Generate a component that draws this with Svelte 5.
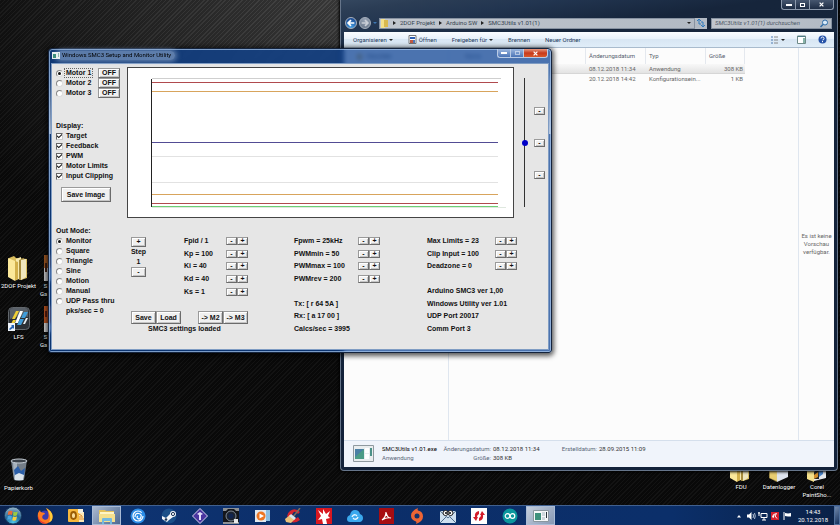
<script>
	const motors = ['Motor 1', 'Motor 2', 'Motor 3'];
	const displays = ['Target', 'Feedback', 'PWM', 'Motor Limits', 'Input Clipping'];
	const modes = ['Monitor', 'Square', 'Triangle', 'Sine', 'Motion', 'Manual', 'UDP Pass thru'];

	const pidParams = ['Fpid / 1', 'Kp = 100', 'Ki = 40', 'Kd = 40', 'Ks = 1'];
	const pwmParams = ['Fpwm = 25kHz', 'PWMmin = 50', 'PWMmax = 100', 'PWMrev = 200'];
	const limitParams = ['Max Limits = 23', 'Clip Input = 100', 'Deadzone = 0'];

	const traces = [
		{ y: 11, end: 373, color: '#cfcfcf' },
		{ y: 15, end: 370, color: '#b04a4e' },
		{ y: 24, end: 370, color: '#d8a45c' },
		{ y: 75, end: 370, color: '#524c94' },
		{ y: 89, end: 370, color: '#e2e2e2' },
		{ y: 115, end: 370, color: '#e2e2e2' },
		{ y: 127, end: 370, color: '#d8a45c' },
		{ y: 136, end: 370, color: '#b04a4e' },
		{ y: 140, end: 378, color: '#dfe8df' },
		{ y: 139, end: 370, color: '#6fce74' }
	];

	const files = [
		{ name: 'SMC3Utils v1.01.exe', date: '08.12.2018 11:34', type: 'Anwendung', size: '308 KB' },
		{ name: 'SMC3Utils.ini', date: '20.12.2018 14:42', type: 'Konfigurationsein...', size: '1 KB' }
	];

	let motor = $state('Motor 1');
	let mode = $state('Monitor');
	let position = $state(50);
</script>

{#snippet folder()}
	<svg class="folder" viewBox="0 0 22 26">
		<path d="M13 21l8-4-5 6z" fill="#444" opacity=".7" />
		<path d="M1 3l5-2 2 2 11 1v19l-6 2-12-4z" fill="#d9bd5e" />
		<path d="M8 4l5-2v21l-5 2z" fill="#f7eab0" />
		<path d="M11 5l5-2v19l-5 3z" fill="#a88d3c" />
		<path d="M13 5l5-1v18l-5 3z" fill="#efe6bd" />
		<path d="M0 3l7 3v20l-7-4z" fill="#fbe89a" />
		<path d="M7 6l3 1v17l-3 2z" fill="#d2b04c" />
	</svg>
{/snippet}

{#snippet param(text)}
	<div class="param">
		<span>{text}</span>
		<span class="spin">
			<button class="btn mini" aria-label="{text} decrease">-</button>
			<button class="btn mini" aria-label="{text} increase">+</button>
		</span>
	</div>
{/snippet}

<div class="screen">
	<main class="desktop">
		<button class="shortcut projekt">
			{@render folder()}
			<span>2DOF Projekt</span>
		</button>
		<button class="shortcut lfs">
			<svg viewBox="0 0 22 24">
				<rect x=".5" y=".5" width="21" height="22" rx="4" fill="#2b3036" stroke="#62676c" />
				<path d="M2 3q0-2 3-2h12q3 0 3 3v6q-9-2-18 2z" fill="#596068" />
				<path d="M8 4h3L7 12H4zM5 13h3l-2 4H3z" fill="#f0cf35" />
				<path d="M12 4h3l-5 12H7z" fill="#fff" />
				<path d="M16 5h4l-3 6h-4zM12 12h4l-3 6H9z" fill="#3f9cd9" />
				<path d="M18 11h2l-3 6h-2z" fill="#e8eef2" />
				<rect y="16" width="7" height="8" fill="#eef4fa" />
				<path d="M1 22l3-3-1-1h3v4l-1-1-3 2z" fill="#2764b5" />
			</svg>
			<span>LFS</span>
		</button>
		<button class="shortcut hidden-one">
			<svg viewBox="0 0 22 26">
				<rect width="22" height="13" fill="#a55b24" />
				<rect y="13" width="22" height="13" fill="#cfcfd2" />
				<rect x="1" y="8" width="2" height="9" fill="#412114" />
			</svg>
			<span>S<br />Ga</span>
		</button>
		<button class="shortcut hidden-two">
			<svg viewBox="0 0 22 26">
				<rect width="22" height="17" fill="#bd5420" />
				<rect y="17" width="22" height="9" fill="#d8d8da" />
				<rect x="1" y="5" width="2" height="6" fill="#5c1d10" />
			</svg>
			<span>S<br />Ga</span>
		</button>
		<button class="shortcut trash">
			<svg viewBox="0 0 22 24">
				<path d="M3 3l16-1-3 20q-5 2-10 0z" fill="#747e89" />
				<path d="M5 4l4 1v17l-3-1z" fill="#a7b2bd" />
				<path d="M6 12l4-4 3 5 4-3-1 8-9 1z" fill="#2c5fa8" />
				<path d="M7 17l4-2 5 2-1 5H7z" fill="#dbe4ec" />
				<ellipse cx="11" cy="3" rx="8" ry="2" fill="#3a4149" stroke="#c8d0d8" />
			</svg>
			<span>Papierkorb</span>
		</button>
		<button class="shortcut fdu">
			{@render folder()}
			<span>FDU</span>
		</button>
		<button class="shortcut logger">
			<svg viewBox="0 0 22 26">
				<path d="M2 3l7 3v19l-7-3z" fill="#f4df8a" />
				<path d="M8 5l12-2v18l-11 5z" fill="#dfe5ee" />
				<path d="M1 5l8 3v18l-8-4z" fill="#e2c565" opacity=".7" />
			</svg>
			<span>Datenlogger</span>
		</button>
		<button class="shortcut corel">
			<svg viewBox="0 0 22 26">
				<path d="M1 4l7 3v19l-7-3z" fill="#f4df8a" />
				<path d="M8 5l12-2v19l-12 3z" fill="#e7e9ec" />
				<path d="M8 16l5-6v13H8z" fill="#222" />
				<path d="M12 8l5-2v12l-4 3z" fill="#4c86cc" />
				<path d="M8 19l4-3v5l-4 2z" fill="#d38c2a" />
			</svg>
			<span>Corel<br />PaintSho...</span>
		</button>

		<!-- Windows Explorer -->
		<section class="explorer">
			<div class="caption">
				<button aria-label="Minimieren"><i class="g-min"></i></button>
				<button aria-label="Maximieren"><i class="g-max"></i></button>
				<button class="wide" aria-label="Schließen">
					<svg viewBox="0 0 8 8"><path d="M1 1l6 6M7 1L1 7" stroke="#fff" stroke-width="2" /></svg>
				</button>
			</div>

			<div class="navrow">
				<button class="round back" aria-label="Zurück">
					<svg viewBox="0 0 12 12"><path d="M10 6H3M6 2.500L2.500 6 6 9.500" /></svg>
				</button>
				<button class="round" aria-label="Vorwärts">
					<svg viewBox="0 0 12 12"><path d="M2 6h7M6 2.500L9.500 6 6 9.500" /></svg>
				</button>
				<i class="caret blue"></i>
				<div class="address">
					<svg class="tiny" viewBox="0 0 9 9">
						<path d="M1 0h4v9H1z" fill="#f4e08a" /><path d="M4 1h4v7H4z" fill="#d9b84e" />
					</svg>
					<i class="arrow"></i><a href="#projekt">2DOF Projekt</a>
					<i class="arrow"></i><a href="#arduino">Arduino SW</a>
					<i class="arrow"></i><a href="#utils">SMC3Utils v1.01(1)</a>
					<i class="caret end"></i>
				</div>
				<button class="refresh" aria-label="Aktualisieren">
					<svg viewBox="0 0 10 10">
						<path d="M1 3l2-2 2 2M3 1v5h2M5 7l2 2 2-2M7 9V4H5" fill="none" stroke="#2f7bbd" />
					</svg>
				</button>
				<div class="search">
					<input aria-label="Suche" placeholder="SMC3Utils v1.01(1) durchsuchen" />
					<svg class="tiny" viewBox="0 0 9 9">
						<circle cx="5" cy="3.500" r="2.500" fill="#d9eaf8" stroke="#2f6ca6" />
						<path d="M3 5.500L.5 8" stroke="#2f6ca6" stroke-width="1.500" />
					</svg>
				</div>
			</div>

			<div class="client">
				<div class="toolbar">
					<button>Organisieren <i class="caret"></i></button>
					<button>
						<svg class="tiny" viewBox="0 0 9 9">
							<path d="M1 .5h7v8H1z" fill="#fff" stroke="#777" />
							<path d="M2 2h5v2H2z" fill="#2d5fb4" /><path d="M2 5h3v3H2z" fill="#c05a43" />
							<path d="M5 5h2v3H5z" fill="#4d79ba" />
						</svg>
						Öffnen
					</button>
					<button>Freigeben für <i class="caret"></i></button>
					<button>Brennen</button>
					<button>Neuer Ordner</button>
					<div class="tools">
						<button aria-label="Ansicht ändern">
							<svg class="tiny" viewBox="0 0 9 9">
								<path d="M1 2h2M1 5h2M1 8h2" stroke="#4f7bb0" />
								<path d="M4 2h4M4 5h4M4 8h4" stroke="#888" />
							</svg>
							<i class="caret"></i>
						</button>
						<button aria-label="Vorschaufenster">
							<svg class="tiny" viewBox="0 0 9 9">
								<path d="M.5 1h8v7.500h-8z" fill="#fff" stroke="#6e8a88" />
								<path d="M6 3h2v5H6z" fill="#86b3a8" /><path d="M1 1.500h7" stroke="#4d7b86" />
							</svg>
						</button>
						<button aria-label="Hilfe">
							<svg class="tiny" viewBox="0 0 9 9">
								<circle cx="4.500" cy="4.500" r="4" fill="#2653a8" />
								<path d="M3 3.500q0-1.500 1.500-1.500T6 3.500 4.500 5M4.500 6v1.200" fill="none" stroke="#fff" />
							</svg>
						</button>
					</div>
				</div>

				<div class="panes">
					<div class="tree">
						<svg class="tiny" viewBox="0 0 9 9">
							<path d="M4.500 0l1 3h3L6 5l1 4-2.500-2L2 9l1-4L.5 3h3z" fill="#d9a93a" />
						</svg>
						Favoriten
					</div>
					<div class="list">
						<table>
							<thead>
								<tr><th>Name</th><th>Änderungsdatum</th><th>Typ</th><th>Größe</th></tr>
							</thead>
							<tbody>
								{#each files as file, i}
									<tr class:selected={i === 0}>
										<td>{file.name}</td>
										<td>{file.date}</td>
										<td>{file.type}</td>
										<td class="size">{file.size}</td>
									</tr>
								{/each}
							</tbody>
						</table>
					</div>
					<div class="preview">Es ist keine Vorschau verfügbar.</div>
				</div>

				<div class="details">
					<svg viewBox="0 0 21 17">
						<path d="M.5.5h20v16H.5z" fill="#e9edef" stroke="#8f999f" />
						<path d="M2 4h9v10H2z" fill="#4b9b86" />
						<path d="M2 4h9L2 12z" fill="#4a7fa5" />
						<path d="M12 3h4v5h-4zM12 9h4v5h-4z" fill="#fff" />
						<path d="M17 3h2v8h-2z" fill="#4b9188" />
					</svg>
					<div class="facts">
						<strong>SMC3Utils v1.01.exe</strong>
						<span class="key">Änderungsdatum:</span><span>08.12.2018 11:34</span>
						<span class="key">Erstelldatum:</span><span>28.09.2015 11:09</span>
						<span class="kind">Anwendung</span>
						<span class="key">Größe:</span><span>308 KB</span>
					</div>
				</div>
			</div>
		</section>

		<!-- SMC3 utility -->
		<section class="smc">
			<header>
				<svg class="appicon" viewBox="0 0 8 7">
					<path d="M0 0h8v7H0z" fill="#e8eef2" /><path d="M1 2h3v4H1z" fill="#3f8f7c" />
					<path d="M6 1h1v4H6z" fill="#8db8b0" />
				</svg>
				<h1>Windows SMC3 Setup and Monitor Utility</h1>
				<div class="caption">
					<button aria-label="Minimize"><i class="g-min"></i></button>
					<button aria-label="Maximize" disabled><i class="g-max"></i></button>
					<button class="wide close" aria-label="Close">
						<svg viewBox="0 0 8 8"><path d="M1 1l6 6M7 1L1 7" stroke="#fff" stroke-width="2" /></svg>
					</button>
				</div>
			</header>

			<div class="body">
				<div class="upper">
					<div class="side">
						{#each motors as name}
							<div class="motor">
								<label><input type="radio" name="motor" value={name} bind:group={motor} /><span>{name}</span></label>
								<button class="btn off">OFF</button>
							</div>
						{/each}
						<div class="heading display">Display:</div>
						{#each displays as name}
							<label><input type="checkbox" checked /><span>{name}</span></label>
						{/each}
						<button class="btn save-image">Save Image</button>
					</div>

					<svg class="plot" viewBox="0 0 385 149" preserveAspectRatio="none">
						{#each traces as t}
							<rect x="24" y={t.y - 1} width={t.end - 24} height="1" fill={t.color} />
						{/each}
						<rect x="23" y="11" width="1" height="128" fill="#222" />
					</svg>

					<div class="manual">
						<input type="range" min="0" max="100" bind:value={position} aria-label="Position" />
						<div class="marks">
							<button class="btn mini">-</button>
							<button class="btn mini">-</button>
							<button class="btn mini">-</button>
						</div>
					</div>
				</div>

				<div class="lower">
					<div class="modes">
						<div class="heading">Out Mode:</div>
						{#each modes as name}
							<label><input type="radio" name="mode" value={name} bind:group={mode} /><span>{name}</span></label>
						{/each}
						<div class="rate">pks/sec = 0</div>
					</div>

					<div class="middle">
						<div class="tuning">
							<div class="step">
								<button class="btn">+</button>
								<span>Step</span>
								<span>1</span>
								<button class="btn">-</button>
							</div>
							<div class="params pid">
								{#each pidParams as text}
									{@render param(text)}
								{/each}
							</div>
						</div>
						<div class="actions">
							<button class="btn">Save</button>
							<button class="btn">Load</button>
							<button class="btn copy">-&gt; M2</button>
							<button class="btn">-&gt; M3</button>
						</div>
						<div class="status">SMC3 settings loaded</div>
					</div>

					<div class="params pwm">
						{#each pwmParams as text}
							{@render param(text)}
						{/each}
						<div></div>
						<div>Tx: [ r 64 5A ]</div>
						<div>Rx: [ a 17 00 ]</div>
						<div>Calcs/sec = 3995</div>
					</div>

					<div class="params limits">
						{#each limitParams as text}
							{@render param(text)}
						{/each}
						<div></div>
						<div>Arduino SMC3 ver 1,00</div>
						<div>Windows Utility ver 1.01</div>
						<div>UDP Port 20017</div>
						<div>Comm Port 3</div>
					</div>
				</div>
			</div>
		</section>
	</main>

	<footer class="taskbar">
		<button class="start" aria-label="Start">
			<svg viewBox="0 0 20 20">
				<defs>
					<radialGradient id="orb" cx=".5" cy=".9" r=".9">
						<stop offset="0" stop-color="#4fc6e8" /><stop offset=".5" stop-color="#24699b" />
						<stop offset="1" stop-color="#9fb8c8" />
					</radialGradient>
				</defs>
				<circle cx="10" cy="10" r="9" fill="url(#orb)" stroke="#16375c" />
				<path d="M5 6q2-1.500 4.500-.5L9 9.500q-2-1-4.500 0z" fill="#ee6a35" />
				<path d="M10.500 6q2 1 4.500 0l-1 4q-2 1-4 0z" fill="#9ccb3f" />
				<path d="M4.500 10.500q2-1 4.300 0L8 14.500q-2-1-4 0z" fill="#4ba7e2" />
				<path d="M10 11q2 1 4.200 0l-1 4q-2 1-4 0z" fill="#f8cf3d" />
			</svg>
		</button>
		<nav class="apps">
			<button aria-label="Firefox">
				<svg viewBox="0 0 16 16">
					<circle cx="8" cy="8.500" r="6" fill="#3a3bb0" />
					<path d="M9 0q6 3 6.500 8T10 15.500Q3 17 1 10 0 5 3 2q0 2 2 2.500Q8 4 8 6l-2 1q-2 3 1 4.500 4 1 4.500-3Q12 4 9 0z" fill="#ff7a22" />
					<path d="M9 0q6 3 6.500 8T12 14.500Q14 11 13 7.500 12 3 9 0z" fill="#ffce3a" />
					<path d="M1 10q2 6 9 5.500l-3-1Q2 13 1 8z" fill="#e3293c" />
				</svg>
			</button>
			<button aria-label="Outlook">
				<svg viewBox="0 0 16 16">
					<rect x="0" y="1" width="12" height="13" rx="1" fill="#f6b83e" />
					<path d="M11 4h5v10h-5z" fill="#fbe7b6" /><path d="M10 1h5v4h-5z" fill="#f1efdf" />
					<ellipse cx="5.500" cy="7.500" rx="2.500" ry="3.500" fill="#f9dd9a" stroke="#9a5c05" stroke-width="1.800" />
					<path d="M11 9h4M11 11h5M11 6l3 2" stroke="#d9892b" />
				</svg>
			</button>
			<button class="active" aria-label="Explorer">
				<svg viewBox="0 0 16 16">
					<path d="M0 2h6l1 1h8v11H0z" fill="#e5c15a" /><path d="M1 4h14v3H1z" fill="#fff5c7" />
					<path d="M0 6h16v8H0z" fill="#f5e08e" /><path d="M3 16v-5q0-1 1-1h8q1 0 1 1v5h-2v-3H5v3z" fill="#74b8df" />
				</svg>
			</button>
			<button aria-label="Ubisoft Connect">
				<svg viewBox="0 0 16 16">
					<circle cx="8" cy="8" r="7.500" fill="#2b8ce6" />
					<circle cx="8" cy="8" r="5" fill="none" stroke="#fff" stroke-width="1.200" stroke-dasharray="27 5" />
					<path d="M5 9q0-4 3.500-3.500T11 9 8 10.500 8 8" fill="none" stroke="#fff" stroke-width="1.200" />
				</svg>
			</button>
			<button aria-label="Steam">
				<svg viewBox="0 0 16 16">
					<circle cx="8" cy="8" r="7.500" fill="#1b4f88" />
					<path d="M1 8l4 2 4-4q0-3 3-3t3 3-3 3l-4 3-2 2-5-3z" fill="#f2f5f8" />
					<circle cx="12" cy="6" r="1.600" fill="#f2f5f8" stroke="#1b3455" /><circle cx="5" cy="11.500" r="1.300" fill="#1b3455" />
				</svg>
			</button>
			<button aria-label="Simulator">
				<svg viewBox="0 0 16 16">
					<path d="M8 .5L15.500 8 8 15.500.5 8z" fill="#4a35a0" stroke="#d8d5ee" />
					<path d="M5 6l3-2 3 2-2 1v5H7V7z" fill="#e4e0fa" />
				</svg>
			</button>
			<button aria-label="Kamera">
				<svg viewBox="0 0 16 16">
					<rect width="16" height="16" fill="#8b8f94" /><path d="M0 3h3l2-2h6l2 2h3v11H0z" fill="#14161a" />
					<circle cx="8" cy="8" r="5" fill="#1c2431" stroke="#7d8894" /><circle cx="8" cy="8" r="2.500" fill="#10244f" />
					<path d="M11 11h4v4h-4z" fill="#e8e8e8" />
				</svg>
			</button>
			<button aria-label="Media Player">
				<svg viewBox="0 0 16 16">
					<rect x="4" y="2" width="12" height="11" fill="#8cbfe2" /><rect x="1" y="2" width="11" height="12" fill="#e2e9ef" />
					<circle cx="7" cy="8" r="4.500" fill="#ee7623" /><path d="M5.500 5.500L10 8l-4.500 2.500z" fill="#fff" />
				</svg>
			</button>
			<button aria-label="CCleaner">
				<svg viewBox="0 0 16 16">
					<path d="M15 4Q10-1 5 3t-1 9 11 0l-2-3q-3 3-5 1t0-5 5 1z" fill="#d3242f" />
					<path d="M15 0L8 9" stroke="#7e6c5a" stroke-width="1.500" /><path d="M0 11l5-4 5 4-4 4-5-1z" fill="#ebc17a" />
					<path d="M4 8l2-2 5 4-2 2z" fill="#d9e5ed" />
				</svg>
			</button>
			<button aria-label="IrfanView">
				<svg viewBox="0 0 16 16">
					<rect width="16" height="16" fill="#d91820" />
					<path d="M2 2l5 4V1l3 5 4-3-2 5 2 2-4 1 1 5H7l-1-5-4 1 3-4z" fill="#fff" />
				</svg>
			</button>
			<button aria-label="Cloud">
				<svg viewBox="0 0 16 16">
					<path d="M3 14q-3 0-3-3t3-4Q4 2 8 2t5 4q3 1 3 4t-3 4z" fill="#3ba9ee" />
					<path d="M5 9q1-3 4-2l1 1M11 9q-1 3-4 2l-1-1" fill="none" stroke="#e8f7ff" stroke-width="1.300" />
				</svg>
			</button>
			<button aria-label="Adobe Reader">
				<svg viewBox="0 0 16 16">
					<rect x="1" width="15" height="16" fill="#a70d12" />
					<path d="M4 12q4-3 4-8 1 6 5 6-4-1-9 2z" fill="none" stroke="#fff" stroke-width="1.200" />
				</svg>
			</button>
			<button aria-label="Origin">
				<svg viewBox="0 0 16 16">
					<path d="M9 0Q8 2 9 2.500q5 1 5 6T7 16q1-2 0-2.500Q2 12 2 7.500T9 0z" fill="#ed6534" />
					<circle cx="8" cy="8" r="2.500" fill="#12326a" />
				</svg>
			</button>
			<button aria-label="Mail">
				<svg viewBox="0 0 16 16">
					<rect y="3" width="16" height="12" fill="#cfe0f0" /><path d="M0 3l8 7 8-7M0 15l6-6M16 15l-6-6" fill="none" stroke="#52708f" />
					<circle cx="5.500" cy="5" r="2.500" fill="#fff" stroke="#222" /><circle cx="10.500" cy="5" r="2.500" fill="#fff" stroke="#222" />
					<circle cx="6" cy="5" r="1" /><circle cx="10" cy="5" r="1" />
				</svg>
			</button>
			<button aria-label="Sync">
				<svg viewBox="0 0 16 16">
					<rect width="16" height="16" fill="#fff" />
					<path d="M8 3Q3 4 4 9h-2l3 4 2-4H6q0-2 2-3zM8 13q5-1 4-6h2l-3-4-2 4h1q0 2-2 3z" fill="#d31c2a" />
				</svg>
			</button>
			<button aria-label="Arduino">
				<svg viewBox="0 0 16 16">
					<circle cx="8" cy="8" r="7.500" fill="#0b979d" />
					<circle cx="5.500" cy="8" r="2.300" fill="none" stroke="#fff" stroke-width="1.200" />
					<circle cx="10.500" cy="8" r="2.300" fill="none" stroke="#fff" stroke-width="1.200" />
				</svg>
			</button>
			<button class="active" aria-label="SMC3 Utility">
				<svg viewBox="0 0 16 16">
					<path d="M.5 2.500h15v11H.5z" fill="#f5f7f8" stroke="#8a979f" /><path d="M2 5h6v7H2z" fill="#3f917c" />
					<path d="M9 4h3v4H9zM9 9h3v3H9z" fill="#cfd8dc" /><path d="M13 4h1v6h-1z" fill="#27323a" />
				</svg>
			</button>
		</nav>
		<div class="tray">
			<button aria-label="Ausgeblendete Symbole"><svg viewBox="0 0 10 10"><path d="M3 6.500L5 4l2 2.500z" fill="#fff" /></svg></button>
			<button aria-label="Lautstärke">
				<svg viewBox="0 0 10 10">
					<path d="M1 3.500h2L5.500 1v8L3 6.500H1z" fill="#fff" /><path d="M7 3q1 2 0 4M8.500 2q1.500 3 0 6" fill="none" stroke="#dfe8f4" stroke-width=".8" />
				</svg>
			</button>
			<button aria-label="Netzwerk">
				<svg viewBox="0 0 10 10"><path d="M3 2.500h6v4H3zM4 9h4M6 7v2M1 1v4M0 2h2" fill="none" stroke="#fff" /></svg>
			</button>
			<button aria-label="Avira">
				<svg viewBox="0 0 10 10">
					<rect x="1" y="1" width="8" height="8" fill="#d8202c" /><path d="M2.500 6q0-3 4-3.500L5 5l2 2.500M4 4l-1 3" fill="none" stroke="#fff" />
				</svg>
			</button>
			<button aria-label="Wartungscenter">
				<svg viewBox="0 0 10 10"><path d="M2 1v8" stroke="#fff" /><path d="M3 2l3 .5L9 2v3.500H6L3 5z" fill="#fff" /></svg>
			</button>
		</div>
		<div class="clock">14:43<br />20.12.2018</div>
		<button class="peek" aria-label="Desktop anzeigen"></button>
	</footer>
</div>

<style>
	:global(body) {
		margin: 0;
		background: #0a0a0a;
	}

	button,
	input {
		font: inherit;
		color: inherit;
		margin: 0;
		padding: 0;
		border: 0;
		background: none;
		box-sizing: border-box;
	}

	svg {
		display: block;
		flex: none;
	}

	.screen {
		min-height: 100vh;
		display: flex;
		flex-direction: column;
		font: 6px/8px Roboto, 'Noto Sans', sans-serif;
		color: #333;
	}

	.desktop {
		position: relative;
		flex: 1;
		overflow: hidden;
		background:
			repeating-linear-gradient(135deg, rgba(255, 255, 255, 0.03) 0 1px, rgba(0, 0, 0, 0.18) 1px 3px),
			radial-gradient(ellipse 50% 60% at 42% 0, #444 0, #2c2c2c 45%, #161616 80%, #0b0b0b 100%);
	}

	/* Desktop shortcuts */
	.shortcut {
		position: absolute;
		width: 40px;
		display: flex;
		flex-direction: column;
		align-items: center;
		gap: 1px;
		color: #fff;
		text-shadow: 0 1px 1px #000;
		white-space: nowrap;
	}

	.shortcut svg {
		width: 22px;
		height: 26px;
	}

	.projekt,
	.lfs,
	.trash {
		left: 0;
		width: 37px;
	}

	.projekt,
	.hidden-one {
		top: 255px;
	}

	.lfs,
	.hidden-two {
		top: 306px;
	}

	.hidden-one,
	.hidden-two {
		left: 35px;
	}

	.hidden-one span,
	.hidden-two span {
		align-self: flex-start;
		padding-left: 5px;
		text-align: right;
	}

	.trash {
		bottom: 13px;
	}

	.fdu,
	.logger,
	.corel {
		top: 456px;
	}

	.fdu {
		right: 79px;
	}

	.logger {
		right: 41px;
	}

	.corel {
		right: 3px;
	}

	/* Caption buttons shared by both windows */
	.caption {
		display: flex;
		justify-content: flex-end;
	}

	.caption button {
		width: 14px;
		height: 10px;
		display: grid;
		place-items: center;
		border: 1px solid #8c99ac;
		border-top: 0;
		border-right-width: 0;
		background: linear-gradient(#46566f, #1d2c44);
	}

	.caption button:first-child {
		border-radius: 0 0 0 3px;
	}

	.caption .wide {
		width: 25px;
		border-right-width: 1px;
		border-radius: 0 0 3px 0;
	}

	.caption svg {
		width: 5px;
		height: 5px;
	}

	.g-min {
		width: 6px;
		height: 2px;
		background: #fff;
	}

	.g-max {
		width: 5px;
		height: 4px;
		box-sizing: border-box;
		border: 1px solid #fff;
	}

	/* Explorer window */
	.explorer {
		position: absolute;
		left: 340px;
		right: 2px;
		top: 0;
		bottom: 34px;
		display: flex;
		flex-direction: column;
		padding: 0 3px 3px;
		border: 1px solid #66758a;
		border-top: 0;
		border-radius: 0 0 4px 4px;
		background: linear-gradient(172deg, #34475f 0, #2b3d55 12px, #223550 30px, #16253b 60px, #13223a);
		box-shadow: 0 0 3px 1px #000;
	}

	.navrow {
		display: flex;
		align-items: center;
		gap: 2px;
		padding: 7px 2px 3px 1px;
		height: 12px;
	}

	.round {
		width: 12px;
		height: 12px;
		border-radius: 50%;
		border: 1px solid #a7b0bd;
		background: radial-gradient(circle at 50% 20%, #98a4b5, #667487);
	}

	.round.back {
		background: radial-gradient(circle at 50% 100%, #45a0e6, #173f86);
	}

	.round path {
		fill: none;
		stroke: #fff;
		stroke-width: 2;
	}

	.round:not(.back) path {
		stroke: #c9ced6;
	}

	.caret {
		display: inline-block;
		border: 2px solid transparent;
		border-top-color: #222;
		border-bottom: 0;
	}

	.caret.blue {
		border-top-color: #3f78b4;
	}

	.caret.end {
		margin-left: auto;
		margin-right: 3px;
	}

	.address,
	.search {
		display: flex;
		align-items: center;
		height: 11px;
		box-sizing: border-box;
		background: linear-gradient(90deg, #c1c6cd, #b2bac4);
		border: 1px solid #8792a1;
	}

	.address {
		flex: 1;
		gap: 4px;
	}

	.address a {
		color: #333f4e;
		text-decoration: none;
	}

	.arrow {
		border: 2px solid transparent;
		border-left: 3px solid #222;
		border-right: 0;
	}

	.refresh {
		width: 12px;
		height: 11px;
		margin-left: -2px;
		background: #b2bac4;
	}

	.refresh svg {
		width: 10px;
		height: 10px;
		margin: auto;
	}

	.search {
		flex: 0 1 121px;
		margin-left: 2px;
		padding: 0 2px 0 3px;
	}

	.search input {
		flex: 1;
		min-width: 0;
		outline: 0;
	}

	.search input::placeholder {
		color: #4d5866;
		font-style: italic;
	}

	.tiny {
		width: 9px;
		height: 9px;
	}

	.client {
		flex: 1;
		display: flex;
		flex-direction: column;
		min-height: 0;
		background: #fcfcfc;
	}

	.toolbar {
		display: flex;
		align-items: center;
		gap: 15px;
		height: 16px;
		padding: 0 7px 0 9px;
		background: linear-gradient(#fafcff, #e6f0fa 50%, #d8e6f3 50%, #e0edf8);
		border-bottom: 1px solid #a9bbcd;
		box-sizing: border-box;
		color: #1e395b;
	}

	.toolbar button {
		display: flex;
		align-items: center;
		gap: 2px;
		white-space: nowrap;
	}

	.tools {
		display: flex;
		gap: 12px;
		margin-left: auto;
	}

	.panes {
		flex: 1;
		display: flex;
		min-height: 0;
	}

	.tree {
		flex: 0 0 105px;
		display: flex;
		align-items: flex-start;
		gap: 3px;
		padding: 4px 0 0 11px;
		box-sizing: border-box;
		border-right: 1px solid #dfe6ef;
	}

	.list {
		flex: 1;
		padding-left: 7px;
	}

	table {
		border-spacing: 0;
		table-layout: fixed;
		width: 289px;
		color: #666;
	}

	th {
		height: 16px;
		padding: 0 3px;
		text-align: left;
		font-weight: 400;
		color: #55606e;
		border-right: 1px solid #e4e8ee;
		box-sizing: border-box;
	}

	th:first-child {
		width: 130px;
		padding-left: 9px;
	}

	th:nth-child(2),
	th:nth-child(3) {
		width: 60px;
	}

	td {
		height: 10px;
		padding: 0 3px;
		white-space: nowrap;
		box-sizing: border-box;
	}

	td:first-child {
		padding-left: 9px;
	}

	.selected td {
		background: linear-gradient(#f8f8f8, #e3e3e3);
		border-bottom: 1px solid #d6d6d6;
	}

	.size {
		text-align: right;
		padding-right: 2px;
	}

	.preview {
		flex: 0 0 36px;
		box-sizing: border-box;
		display: grid;
		align-content: center;
		text-align: center;
		border-left: 1px solid #dfe6ef;
		color: #666;
	}

	.details {
		display: flex;
		align-items: flex-start;
		gap: 8px;
		height: 27px;
		box-sizing: border-box;
		padding: 4px 9px;
		background: #f0f4fb;
		border-top: 1px solid #d5dfec;
	}

	.details svg {
		width: 21px;
		height: 17px;
	}

	.facts {
		display: grid;
		grid-template-columns: 58px 49px 64px 38px auto;
		column-gap: 2px;
		row-gap: 1px;
		white-space: nowrap;
	}

	.facts strong {
		font-weight: 400;
		color: #000;
	}

	.key,
	.kind {
		color: #5a6779;
	}

	.key {
		text-align: right;
	}

	/* SMC3 window */
	.smc {
		position: absolute;
		left: 48px;
		top: 48px;
		width: 504px;
		box-sizing: border-box;
		padding: 0 3px 3px;
		border: 1px solid #14233c;
		border-radius: 4px 4px 3px 3px;
		background:
			linear-gradient(rgba(255, 255, 255, 0) 15px, rgba(255, 255, 255, 0.6) 85px, rgba(255, 255, 255, 0) 85px),
			rgba(13, 67, 149, 0.74);
		backdrop-filter: blur(2px);
		box-shadow:
			inset 0 0 0 1px rgba(170, 200, 235, 0.7),
			0 1px 5px 2px rgba(0, 0, 0, 0.65);
	}

	header {
		display: flex;
		align-items: flex-start;
		height: 14px;
	}

	.appicon {
		width: 8px;
		height: 7px;
		margin-top: 3px;
	}

	h1 {
		flex: 1;
		margin: 2px 0 0 2px;
		font-size: 6px;
		font-weight: 400;
		line-height: 8px;
		color: #000;
	}

	header::before {
		content: '';
		position: absolute;
		left: 8px;
		top: 2px;
		width: 118px;
		height: 9px;
		border-radius: 5px;
		background: rgba(165, 190, 222, 0.5);
		box-shadow: 0 0 5px 2px rgba(165, 190, 222, 0.5);
	}

	.appicon,
	h1 {
		position: relative;
	}

	header .caption button {
		width: 13px;
		height: 9px;
		border-color: #b9cbe5;
		background: linear-gradient(#9db8df, #4a74b6);
	}

	header .caption button:disabled i {
		opacity: 0.5;
	}

	header .caption .close {
		width: 25px;
		background: linear-gradient(#e59a82, #c83a1b 50%, #d9592c);
	}

	.body {
		background: #e6e6e6;
		border: 1px solid #7f9cc3;
		margin: 0 -1px -1px;
		padding: 3px 0 14px 4px;
		font: bold 7px/10px 'Liberation Sans', Arial, sans-serif;
		color: #111;
	}

	.upper {
		display: grid;
		grid-template-columns: 71px 1fr 34px;
	}

	.side {
		padding-top: 1px;
	}

	label {
		display: flex;
		align-items: center;
		gap: 3px;
		height: 10px;
		white-space: nowrap;
	}

	.heading {
		height: 10px;
	}

	.display {
		margin-top: 23px;
	}

	.motor {
		display: flex;
		justify-content: space-between;
		padding-right: 7px;
	}

	.motor label span {
		padding: 0 1px;
		margin-left: -1px;
		line-height: 8px;
	}

	.motor:first-child label span {
		outline: 1px dotted #666;
	}

	input[type='radio'],
	input[type='checkbox'] {
		appearance: none;
		width: 7px;
		height: 7px;
		flex: none;
		display: grid;
		place-items: center;
		background: #fff;
		border: 1px solid;
		border-color: #888 #ddd #ddd #888;
	}

	input[type='radio'] {
		border-radius: 50%;
	}

	input[type='radio']:checked::before {
		content: '';
		width: 3px;
		height: 3px;
		border-radius: 50%;
		background: #111;
	}

	input[type='checkbox'] {
		border-color: #666 #ccc #ccc #666;
	}

	input[type='checkbox']:checked::before {
		content: '';
		width: 5px;
		height: 5px;
		background: #222;
		clip-path: polygon(0 35%, 35% 65%, 100% 5%, 100% 35%, 35% 95%, 0 65%);
	}

	.btn {
		background: #f0f0f0;
		border: 1px solid;
		border-color: #9a9a9a #6b6b6b #6b6b6b #9a9a9a;
		box-shadow:
			inset 1px 1px 0 #fff,
			inset -1px -1px 0 #c5c5c5;
		text-align: center;
		white-space: nowrap;
	}

	.off {
		width: 22px;
		height: 10px;
		line-height: 8px;
	}

	.save-image {
		display: block;
		width: 50px;
		height: 15px;
		margin: 6px 0 0 5px;
	}

	.mini {
		width: 11px;
		height: 8px;
		line-height: 4px;
	}

	.plot {
		width: 100%;
		height: 151px;
		box-sizing: border-box;
		border: 1px solid #444;
		background: #fff;
		shape-rendering: crispEdges;
	}

	.manual {
		display: flex;
		gap: 6px;
		padding: 11px 0 0 7px;
	}

	input[type='range'] {
		appearance: none;
		writing-mode: vertical-lr;
		width: 7px;
		height: 129px;
		background: linear-gradient(#333, #333) center / 1px 100% no-repeat;
	}

	input[type='range']::-webkit-slider-thumb {
		appearance: none;
		width: 6px;
		height: 6px;
		border-radius: 50%;
		background: #0000c8;
	}

	.marks {
		display: flex;
		flex-direction: column;
		gap: 24px;
		padding-top: 29px;
	}

	.lower {
		display: flex;
		padding-top: 8px;
	}

	.modes {
		width: 75px;
	}

	.rate {
		padding-left: 10px;
	}

	.middle {
		width: 117px;
		padding-top: 9px;
	}

	.tuning {
		display: flex;
		justify-content: space-between;
	}

	.step {
		width: 15px;
		display: flex;
		flex-direction: column;
		align-items: center;
		padding-top: 2px;
	}

	.step .btn {
		width: 15px;
		height: 10px;
		line-height: 8px;
	}

	.params {
		display: grid;
		grid-template-rows: repeat(8, 1fr);
		align-items: center;
		height: 100px;
		white-space: nowrap;
	}

	.pid {
		grid-template-rows: repeat(5, 1fr);
		width: 64px;
		height: 63px;
	}

	.pwm {
		width: 86px;
		margin: 9px 0 0 46px;
	}

	.limits {
		width: 90px;
		margin: 9px 0 0 47px;
	}

	.param {
		display: flex;
		justify-content: space-between;
		align-items: center;
	}

	.spin {
		display: flex;
	}

	.actions {
		display: flex;
		padding-top: 13px;
	}

	.actions .btn {
		width: 25px;
		height: 13px;
	}

	.actions .copy {
		margin-left: 17px;
	}

	.status {
		padding-left: 17px;
	}

	/* Taskbar */
	.taskbar {
		display: flex;
		align-items: center;
		height: 20px;
		box-sizing: border-box;
		border-top: 1px solid #40608f;
		background: linear-gradient(90deg, #0b2350, #0e3472 12%, #0c2e69 40%, #0b2f6a 80%, #0a2146);
		color: #fff;
	}

	.start {
		padding: 0 7px 0 3px;
	}

	.start svg {
		width: 20px;
		height: 19px;
	}

	.apps {
		display: flex;
		gap: 2px;
		margin-right: auto;
	}

	.apps button {
		width: 29px;
		height: 19px;
		display: grid;
		place-items: center;
	}

	.apps svg {
		width: 16px;
		height: 16px;
	}

	.apps .active {
		box-shadow: inset 0 0 0 1px #a9bbd6;
		background: linear-gradient(135deg, #aebcd2, #4a668f);
	}

	.apps .active:last-child {
		background: linear-gradient(135deg, #c6d0de, #8496b3);
	}

	.tray {
		display: flex;
		gap: 2px;
	}

	.tray svg {
		width: 10px;
		height: 10px;
	}

	.clock {
		width: 42px;
		text-align: center;
	}

	.peek {
		width: 6px;
		height: 19px;
		border: 1px solid #51709c;
		background: linear-gradient(135deg, #7289ab, #14305c);
	}
</style>
